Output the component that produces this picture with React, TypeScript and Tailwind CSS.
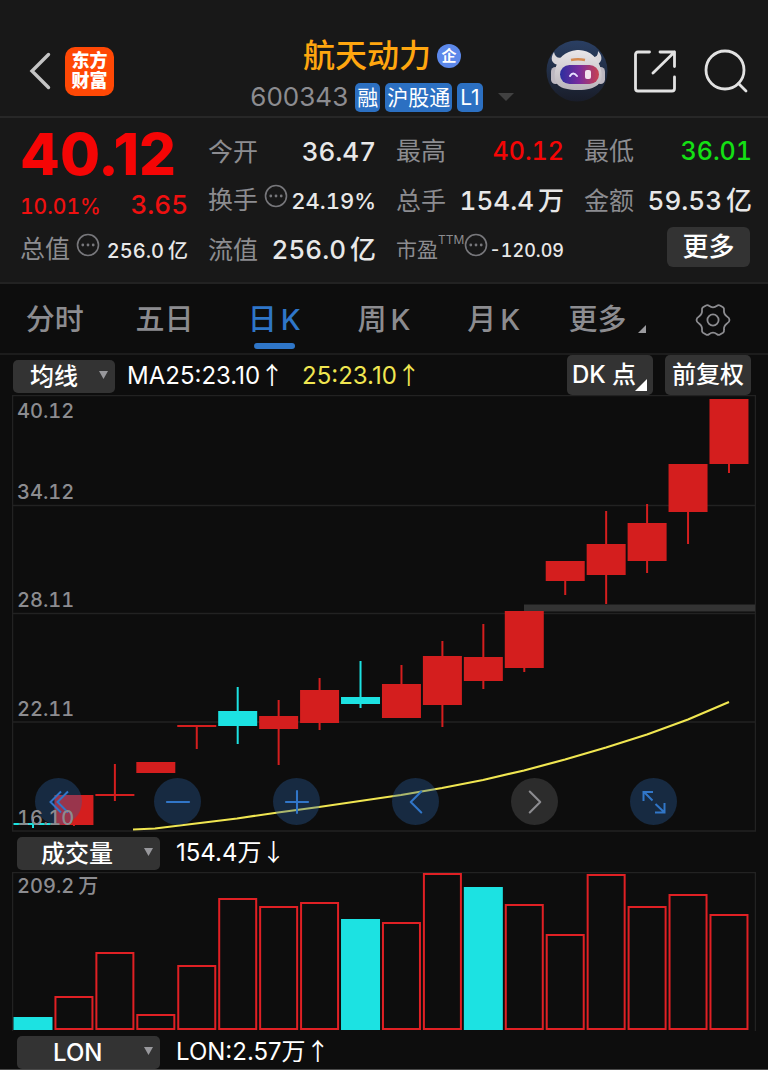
import type { ReactNode } from "react"
import { ChevronLeft, ChevronRight, Minus, Plus } from "lucide-react"

type Candle = {
  top: number
  bottom: number
  high: number
  low: number
  volume: number
  down?: boolean
}

// prices and volumes are in chart units, measured from the top of each panel
const candles: Candle[] = [
  { top: 428, bottom: 430, high: 424, low: 433, volume: 13, down: true },
  { top: 400, bottom: 430, high: 400, low: 431, volume: 34 },
  { top: 399, bottom: 401, high: 369, low: 406, volume: 78 },
  { top: 367, bottom: 378, high: 367, low: 378, volume: 16 },
  { top: 330, bottom: 332, high: 330, low: 354, volume: 65 },
  { top: 316, bottom: 331, high: 292, low: 349, volume: 132, down: true },
  { top: 321, bottom: 334, high: 305, low: 370, volume: 124 },
  { top: 295, bottom: 328, high: 283, low: 335, volume: 128 },
  { top: 302, bottom: 309, high: 266, low: 313, volume: 111, down: true },
  { top: 289, bottom: 323, high: 270, low: 323, volume: 108 },
  { top: 261, bottom: 310, high: 246, low: 332, volume: 157 },
  { top: 262, bottom: 286, high: 229, low: 294, volume: 143 },
  { top: 216, bottom: 273, high: 216, low: 277, volume: 126 },
  { top: 166, bottom: 186, high: 166, low: 200, volume: 96 },
  { top: 149, bottom: 180, high: 116, low: 209, volume: 156 },
  { top: 128, bottom: 166, high: 109, low: 178, volume: 124 },
  { top: 69, bottom: 117, high: 69, low: 149, volume: 136 },
  { top: 4, bottom: 69, high: 4, low: 78, volume: 116 },
]

const filledVolumes = [0, 8, 11]
const centerOf = (i: number) => 21 + i * 40.94

const UP = "#d41e1e"
const DOWN = "#1ce2e2"

function MoreInfo() {
  return (
    <button type="button" aria-label="说明" className="mt-2 self-start">
      <svg className="size-6" viewBox="0 0 24 24" fill="none">
        <circle cx="12" cy="12" r="10.5" stroke="#77777b" strokeWidth="1.6" />
        <circle cx="6.8" cy="12" r="1.4" fill="#77777b" />
        <circle cx="12" cy="12" r="1.4" fill="#77777b" />
        <circle cx="17.2" cy="12" r="1.4" fill="#77777b" />
      </svg>
    </button>
  )
}

function Stat({ label, value, unit, info, className = "text-[26px] text-[#e8e8e8]" }: {
  label: ReactNode
  value: string
  unit?: string
  info?: boolean
  className?: string
}) {
  return (
    <div className="flex items-baseline whitespace-nowrap">
      <span className="text-[25px] text-[#8c8c90]">{label}</span>
      {info && <span className="ml-1.5 flex self-start">
        <MoreInfo />
      </span>}
      <span className={`ml-auto font-medium ${className}`}>
        {value}
        {unit && <span className="ml-1">{unit}</span>}
      </span>
    </div>
  )
}

function Robot() {
  return (
    <svg className="size-[62px]" viewBox="0 0 62 62">
      <defs>
        <linearGradient id="bg" x1="0" y1="0" x2="0" y2="1">
          <stop offset="0" stopColor="#2a3f63" />
          <stop offset="1" stopColor="#191d29" />
        </linearGradient>
        <linearGradient id="visor" x1="0" y1="0" x2="1" y2="0">
          <stop offset="0" stopColor="#2b2f9f" />
          <stop offset="0.5" stopColor="#7a2c9c" />
          <stop offset="1" stopColor="#c9434f" />
        </linearGradient>
        <linearGradient id="shell" x1="0" y1="0" x2="0" y2="1">
          <stop offset="0" stopColor="#e9e6e8" />
          <stop offset="1" stopColor="#b9b4bb" />
        </linearGradient>
      </defs>
      <circle cx="31" cy="31" r="30.5" fill="url(#bg)" />
      <path d="M8 12C4 18 5 24 13 25L18 17C12 19 9 17 8 12Z" fill="#d9d6da" />
      <path d="M52 11C57 16 57 23 49 25L44 17C50 18 52 16 52 11Z" fill="#d9d6da" />
      <rect x="5" y="27" width="9" height="17" rx="4.5" fill="#bdb8c1" />
      <rect x="50" y="27" width="9" height="17" rx="4.5" fill="#bdb8c1" />
      <path d="M31 10C43 9 53 18 55 30C58 43 51 50 32 50C13 50 7 44 9 31C11 18 19 11 31 10Z" fill="url(#shell)" />
      <rect x="14" y="25" width="39" height="19" rx="9.5" fill="url(#visor)" />
      <path d="M25 20Q32 18.500 39 20" stroke="#d58a51" strokeWidth="2.5" fill="none" />
      <path d="M24 36Q27 31 31 36" stroke="#e7e1ff" strokeWidth="2" fill="none" strokeLinecap="round" />
      <rect x="39" y="30" width="6" height="9" rx="2" fill="#f3e2ed" />
    </svg>
  )
}

function Header() {
  return (
    <header className="flex h-[118px] items-center border-b-2 border-[#272727] bg-[#181818] pt-[26px] pr-5 pl-4">
      <div className="flex flex-1 items-center">
        <button type="button" aria-label="返回" className="ml-3 text-[#c4c4c4]">
          <svg className="h-10 w-6" viewBox="0 0 24 40" fill="none" stroke="currentColor" strokeWidth="3.4" strokeLinecap="round">
            <path d="M20.500 3.500L4 20L20.500 36.500" />
          </svg>
        </button>
        <a href="#" className="ml-[13px] flex size-[49px] flex-col items-center justify-center rounded-[10px] bg-[#ff4805] text-[18px] leading-5 font-black text-white">
          <span>东方</span>
          <span>财富</span>
        </a>
      </div>

      <div className="flex flex-col items-center gap-1 pt-3">
        <h1 className="flex items-center gap-1.5 text-[32px] leading-9 font-medium text-[#ffa60f]">
          航天动力
          <span className="flex size-6 items-center justify-center rounded-full bg-[#5c88ea] text-[15px] font-bold text-white">企</span>
        </h1>
        <div className="flex items-center gap-[5px] text-[21px] leading-[29px] text-white">
          <span className="mr-0.5 text-[26px] leading-[38px] text-[#8c8c90]">600343</span>
          <span className="rounded-[5px] bg-[#2c70c2] px-0.5">融</span>
          <span className="rounded-[5px] bg-[#2c70c2] px-0.5">沪股通</span>
          <span className="rounded-[5px] bg-[#2c70c2] px-[3px]">L1</span>
          <svg className="ml-2.5 h-2 w-4" viewBox="0 0 16 8"><path d="M0 0H16L8 8Z" fill="#414141" /></svg>
        </div>
      </div>

      <div className="flex flex-1 items-center justify-end">
        <button type="button" aria-label="智能助手"><Robot /></button>
        <button type="button" aria-label="分享" className="ml-[26px]">
          <svg className="h-[43px] w-[42px]" viewBox="0 0 42 43" fill="none" stroke="#e2e2e2" strokeWidth="2.8" strokeLinecap="round" strokeLinejoin="round">
            <path d="M15.500 2H4Q1.500 2 1.500 4.500V38.500Q1.500 41 4 41H38Q40.500 41 40.500 38.500V27" />
            <path d="M26 2H40.500V16.500M40.500 2L19 23" />
          </svg>
        </button>
        <button type="button" aria-label="搜索" className="ml-7">
          <svg className="size-11" viewBox="0 0 44 44" fill="none" stroke="#e2e2e2" strokeWidth="2.8" strokeLinecap="round">
            <circle cx="21" cy="21" r="19" />
            <path d="M34.500 34.500L42 42" />
          </svg>
        </button>
      </div>
    </header>
  )
}

function Quote() {
  return (
    <section className="grid auto-rows-[49px] grid-cols-4 gap-x-5 border-b-2 border-[#222222] bg-[#181818] pt-[9px] pr-4 pb-2 pl-5 leading-[49px] tabular-nums">
      <div className="pt-[3px] text-[58px] font-extrabold text-[#f50505] normal-nums">40.12</div>
      <Stat label="今开" value="36.47" />
      <Stat label="最高" value="40.12" className="text-[25px] text-[#f50505]" />
      <Stat label="最低" value="36.01" className="text-[25px] text-[#14e014]" />

      <div className="flex items-baseline justify-between pt-1 font-medium text-[#ee1010]">
        <span className="text-[21px]">10.01%</span>
        <span className="text-[26px]">3.65</span>
      </div>
      <Stat label="换手" value="24.19%" info className="text-[22px] text-[#e8e8e8]" />
      <Stat label="总手" value="154.4" unit="万" />
      <Stat label="金额" value="59.53" unit="亿" />

      <Stat label="总值" value="256.0" unit="亿" info className="text-[20px] text-[#e8e8e8]" />
      <Stat label="流值" value="256.0" unit="亿" />
      <div className="flex items-baseline whitespace-nowrap">
        <span className="text-[21px] text-[#8c8c90]">市盈</span>
        <span className="self-start text-[12px] leading-[30px] text-[#8c8c90]">TTM</span>
        <MoreInfo />
        <span className="ml-auto text-[18px] font-medium text-[#e8e8e8]">-120.09</span>
      </div>
      <div className="flex items-center justify-end pr-0.5 pb-1.5">
        <button type="button" className="h-10 w-[83px] rounded-md bg-[#333333] text-[26px] leading-10 font-medium text-white">更多</button>
      </div>
    </section>
  )
}

const tabs = [
  { name: "分时" },
  { name: "五日" },
  { name: "日", suffix: "K", active: true },
  { name: "周", suffix: "K" },
  { name: "月", suffix: "K" },
]

function Tabs() {
  return (
    <nav className="grid h-[71px] grid-cols-7 border-b-2 border-[#1c1c1c] text-[29px] leading-[71px] font-medium text-[#8c8c90]">
      {tabs.map((tab) => (
        <button
          key={tab.name}
          type="button"
          className={tab.active ? "flex flex-col items-center text-[#2f76c8]" : "flex flex-col items-center"}
        >
          <span className="flex h-[59px] gap-1">
            {tab.name}
            {tab.suffix && <span>{tab.suffix}</span>}
          </span>
          {tab.active && <span className="h-1.5 w-[41px] rounded-full bg-[#2f76c8]" />}
        </button>
      ))}
      <button type="button" className="flex justify-center gap-3 pl-2">
        更多
        <svg className="mt-[41px] size-2" viewBox="0 0 8 8"><path d="M8 0V8H0Z" fill="#9a9a9e" /></svg>
      </button>
      <button type="button" aria-label="设置" className="flex items-center justify-center">
        <svg className="size-9" viewBox="0 0 36 36" fill="none" stroke="#8c8c90" strokeWidth="1.8" strokeLinejoin="round">
          <path d="M11 3.500Q12.500 2.500 14 3.800Q18 6.800 22 3.800Q23.500 2.500 25 3.500L28 5.300Q29.300 6.200 29 8Q28.500 12 32 14.500Q34.500 16 34.500 18Q34.500 20 32 21.500Q28.500 24 29 28Q29.300 29.800 28 30.700L25 32.500Q23.500 33.500 22 32.200Q18 29.200 14 32.200Q12.500 33.500 11 32.500L8 30.700Q6.700 29.800 7 28Q7.500 24 4 21.500Q1.500 20 1.500 18Q1.500 16 4 14.500Q7.500 12 7 8Q6.700 6.200 8 5.300Z" />
          <circle cx="18" cy="18" r="5.600" />
        </svg>
      </button>
    </nav>
  )
}

function Picker({ name, value, className }: { name: string; value: string; className: string }) {
  return (
    <div className="relative h-[33px]">
      <select
        aria-label={name}
        className={`h-[33px] appearance-none rounded-[5px] bg-[#333333] text-[24px] leading-[33px] font-medium text-white ${className}`}
      >
        <option>{value}</option>
      </select>
      <svg className="pointer-events-none absolute top-3 right-[7px] h-2 w-[9px]" viewBox="0 0 9 8">
        <path d="M0 0H9L4.500 8Z" fill="#98989c" />
      </svg>
    </div>
  )
}

function Arrow({ children }: { children: string }) {
  return <span className="font-['Noto_Sans_CJK_SC',sans-serif]">{children}</span>
}

const round = "flex size-[47px] items-center justify-center rounded-full bg-[#2a62a3]/35 text-[#3176c8]"

function PriceChart() {
  return (
    <div className="relative mx-3">
      <svg className="block w-full" viewBox="0 0 744 437">
        <g stroke="#222222" strokeWidth="1.500" fill="none">
          <rect x="0.500" y="0.500" width="743" height="435.500" />
          <path d="M0 110.500H744M0 218.500H744M0 327H744" />
        </g>
        <rect x="512" y="209.500" width="231" height="7" fill="#333333" />
        {candles.map((c, i) => {
          const x = centerOf(i)
          const color = c.down ? DOWN : UP
          return (
            <g key={i} fill={color}>
              <rect x={x - 1} y={c.high} width="2" height={c.low - c.high} />
              <rect x={x - 19.5} y={c.top} width="39" height={c.bottom - c.top} />
            </g>
          )
        })}
        <polyline
          points="121,434.500 143,433.500 184,428.500 225,423.500 266,417.500 307,412 348,406 389,400 430,393 471,385 512,375.500 553,364.500 594,352.500 635,339.500 676,324.500 717,307"
          fill="none"
          stroke="#f0e651"
          strokeWidth="2.200"
          strokeLinejoin="round"
        />
      </svg>
      <div className="absolute top-[383px] left-[23px] flex gap-[72px]">
        <button type="button" aria-label="最早" className={round}>
          <svg className="h-6 w-5" viewBox="0 0 20 24" fill="none" stroke="currentColor" strokeWidth="2">
            <path d="M12 1.500L1.500 12L12 22.500M19 1.500L8.500 12L19 22.500" />
          </svg>
        </button>
        <button type="button" aria-label="缩小" className={round}><Minus size={38} strokeWidth={1.3} /></button>
        <button type="button" aria-label="放大" className={round}><Plus size={38} strokeWidth={1.3} /></button>
        <button type="button" aria-label="左移" className={round}><ChevronLeft size={42} strokeWidth={1.2} /></button>
        <button type="button" aria-label="右移" className="flex size-[47px] items-center justify-center rounded-full bg-[#2c2c2c] text-[#8c8c90]"><ChevronRight size={42} strokeWidth={1.2} /></button>
        <button type="button" aria-label="全屏" className={round}>
          <svg className="size-6" viewBox="0 0 24 24" fill="none" stroke="currentColor" strokeWidth="2">
            <path d="M1.500 11V2H11M2 2L10.500 10.500M22.500 13V22.500H13M22.500 22.500L13.500 14" />
          </svg>
        </button>
      </div>
      <div className="pointer-events-none absolute inset-y-0 left-[5px] text-[20px] leading-6 font-medium text-[#8c8c90] tabular-nums">
        <div className="mt-1 h-[81px]">40.12</div>
        <div className="h-[108px]">34.12</div>
        <div className="h-[109px]">28.11</div>
        <div className="h-[109px]">22.11</div>
        <div>16.10</div>
      </div>
    </div>
  )
}

function VolumeChart() {
  return (
    <div className="relative mx-3">
      <svg className="block w-full" viewBox="0 0 744 159">
        <path d="M0.500 159V0.500H743.500V159" stroke="#222222" strokeWidth="1.500" fill="none" />
        {candles.map((c, i) => {
          const x = centerOf(i)
          return filledVolumes.includes(i) ? (
            <rect key={i} x={x - 19.5} y={158 - c.volume} width="39" height={c.volume} fill={DOWN} />
          ) : (
            <rect key={i} x={x - 18.5} y={159 - c.volume} width="37" height={c.volume - 2} fill="none" stroke="#e02024" strokeWidth="2" />
          )
        })}
      </svg>
      <div className="absolute top-0.5 left-[5px] flex gap-1 text-[20px] leading-6 font-medium text-[#8c8c90] tabular-nums">
        209.2<span>万</span>
      </div>
    </div>
  )
}

export default function App() {
  return (
    <div className="min-h-screen bg-[#0d0d0d] font-['Inter','Noto_Sans_CJK_SC',sans-serif] text-white">
      <Header />
      <Quote />
      <Tabs />

      <div className="flex h-10 items-center pr-[17px] pl-[13px] text-[24px] whitespace-nowrap">
        <Picker name="均线" value="均线" className="w-[102px] pl-[17px]" />
        <span className="ml-3">MA25:23.10<Arrow>↑</Arrow></span>
        <span className="ml-[18px] text-[#f0e651]">25:23.10<Arrow>↑</Arrow></span>
        <button type="button" className="relative ml-auto h-10 w-[86px] rounded-[5px] bg-[#333333] pr-3 text-[24px] font-medium">
          DK 点
          <svg className="absolute right-1.5 bottom-1 size-3" viewBox="0 0 12 12"><path d="M12 0V12H0Z" fill="#fff" /></svg>
        </button>
        <button type="button" className="ml-3 h-10 w-[86px] rounded-[5px] bg-[#333333] text-[24px] font-medium">前复权</button>
      </div>
      <PriceChart />

      <div className="flex h-10 items-center px-[17px] text-[24px]">
        <Picker name="成交量" value="成交量" className="w-[143px] pl-6" />
        <span className="ml-4">154.4万<Arrow>↓</Arrow></span>
      </div>
      <VolumeChart />

      <div className="flex h-[39px] items-center border-b border-[#4a4a4a] px-[17px] pt-0.5 text-[24px]">
        <Picker name="指标" value="LON" className="w-[143px] pl-9" />
        <span className="ml-4">LON:2.57万<Arrow>↑</Arrow></span>
      </div>
    </div>
  )
}
